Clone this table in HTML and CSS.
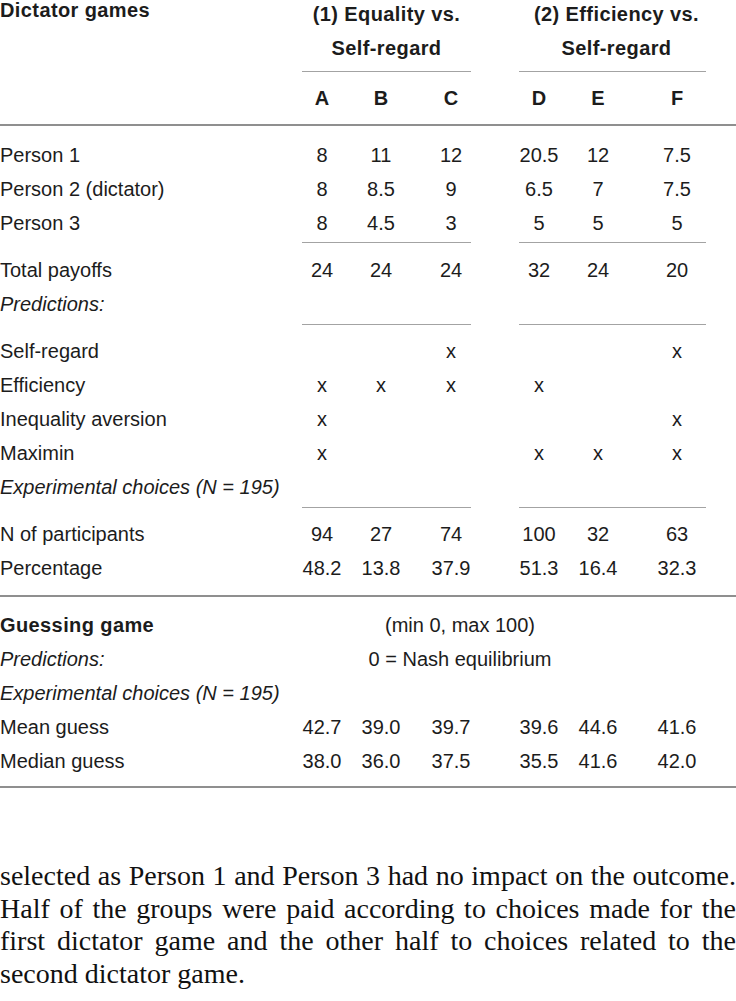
FILE: index.html
```html
<!DOCTYPE html>
<html>
<head>
<meta charset="utf-8">
<link rel="stylesheet" href="styles.css">
</head>
<body>
<div class="page">
  <div class="table">
    <div class="head">
      <div class="hlabel">Dictator games</div>
      <div class="gtitle g1">(1) Equality vs.<br>Self-regard</div>
      <div class="gtitle g2">(2) Efficiency vs.<br>Self-regard</div>
    </div>
    <div class="grule"><span class="r1"></span><span class="r2"></span></div>
    <div class="row letters">
      <div></div><div>A</div><div>B</div><div>C</div><div></div><div>D</div><div>E</div><div>F</div>
    </div>
    <div class="frule"></div>

    <div class="sec s-pay">
      <div class="row"><div class="lab">Person 1</div><div>8</div><div>11</div><div>12</div><div></div><div>20.5</div><div>12</div><div>7.5</div></div>
      <div class="row"><div class="lab">Person 2 (dictator)</div><div>8</div><div>8.5</div><div>9</div><div></div><div>6.5</div><div>7</div><div>7.5</div></div>
      <div class="row"><div class="lab">Person 3</div><div>8</div><div>4.5</div><div>3</div><div></div><div>5</div><div>5</div><div>5</div></div>
    </div>
    <div class="grule"><span class="r1"></span><span class="r2"></span></div>

    <div class="sec s-tot">
      <div class="row"><div class="lab">Total payoffs</div><div>24</div><div>24</div><div>24</div><div></div><div>32</div><div>24</div><div>20</div></div>
      <div class="row"><div class="lab it">Predictions:</div></div>
    </div>
    <div class="grule"><span class="r1"></span><span class="r2"></span></div>

    <div class="sec s-pred">
      <div class="row"><div class="lab">Self-regard</div><div></div><div></div><div>x</div><div></div><div></div><div></div><div>x</div></div>
      <div class="row"><div class="lab">Efficiency</div><div>x</div><div>x</div><div>x</div><div></div><div>x</div><div></div><div></div></div>
      <div class="row"><div class="lab">Inequality aversion</div><div>x</div><div></div><div></div><div></div><div></div><div></div><div>x</div></div>
      <div class="row"><div class="lab">Maximin</div><div>x</div><div></div><div></div><div></div><div>x</div><div>x</div><div>x</div></div>
      <div class="row"><div class="lab it">Experimental choices (N = 195)</div></div>
    </div>
    <div class="grule"><span class="r1"></span><span class="r2"></span></div>

    <div class="sec s-exp">
      <div class="row"><div class="lab">N of participants</div><div>94</div><div>27</div><div>74</div><div></div><div>100</div><div>32</div><div>63</div></div>
      <div class="row"><div class="lab">Percentage</div><div>48.2</div><div>13.8</div><div>37.9</div><div></div><div>51.3</div><div>16.4</div><div>32.3</div></div>
    </div>
    <div class="frule"></div>

    <div class="sec s-guess">
      <div class="row"><div class="lab bold">Guessing game</div><div class="span">(min 0, max 100)</div></div>
      <div class="row"><div class="lab it">Predictions:</div><div class="span">0 = Nash equilibrium</div></div>
      <div class="row"><div class="lab it">Experimental choices (N = 195)</div></div>
      <div class="row"><div class="lab">Mean guess</div><div>42.7</div><div>39.0</div><div>39.7</div><div></div><div>39.6</div><div>44.6</div><div>41.6</div></div>
      <div class="row"><div class="lab">Median guess</div><div>38.0</div><div>36.0</div><div>37.5</div><div></div><div>35.5</div><div>41.6</div><div>42.0</div></div>
    </div>
    <div class="frule"></div>
  </div>

  <p class="para">selected as Person 1 and Person 3 had no impact on the outcome. Half of the groups were paid according to choices made for the first dictator game and the other half to choices related to the second dictator game.</p>
</div>
</body>
</html>
```

FILE: styles.css
```css
html, body {
  margin: 0;
  padding: 0;
  background: #ffffff;
}

.page {
  width: 736px;
}

.table {
  font-family: "Liberation Sans", Arial, sans-serif;
  font-size: 20px;
  color: #1c1c1c;
}

.head,
.row,
.grule {
  display: grid;
  grid-template-columns: 302px 40px 78px 62px 37px 40px 78px 80px;
}

.head {
  height: 71px;
}

.hlabel {
  grid-column: 1;
  font-weight: bold;
  letter-spacing: 0.4px;
  line-height: 20px;
}

.gtitle {
  font-weight: bold;
  letter-spacing: 0.4px;
  line-height: 34px;
  margin-top: -3px;
  text-align: center;
  white-space: nowrap;
}

.g1 {
  grid-column: 2 / 5;
  margin-right: 11px;
}

.g2 {
  grid-column: 6 / 9;
  margin-right: 11px;
  padding-left: 8px;
}

.grule {
  height: 1px;
}

.grule .r1,
.grule .r2 {
  background: #a3a3a3;
  height: 1px;
}

.grule .r1 {
  grid-column: 2 / 5;
  margin-right: 11px;
}

.grule .r2 {
  grid-column: 6 / 9;
  margin-right: 11px;
}

.frule {
  height: 2px;
  background: #8f8f8f;
}

.row {
  height: 34px;
  line-height: 34px;
  text-align: center;
  white-space: nowrap;
}

.row.letters {
  height: 52px;
  line-height: 52px;
  font-weight: bold;
}

.row .lab {
  text-align: left;
}

.it {
  font-style: italic;
}

.bold {
  font-weight: bold;
  letter-spacing: 0.4px;
}

.row .span {
  grid-column: 2 / 9;
  padding-right: 99px;
  text-align: center;
}

.s-pay {
  padding: 12px 0 2px;
}

.s-tot {
  padding: 10px 0 3px;
}

.s-pred {
  padding: 9px 0 3px;
}

.s-exp {
  padding: 9px 0 10px;
}

.s-guess {
  padding: 11px 0 8px;
}

.para {
  margin: 72px 0 0;
  font-family: "Liberation Serif", "Times New Roman", serif;
  font-size: 28px;
  line-height: 32.5px;
  color: #111111;
  text-align: justify;
}
```
